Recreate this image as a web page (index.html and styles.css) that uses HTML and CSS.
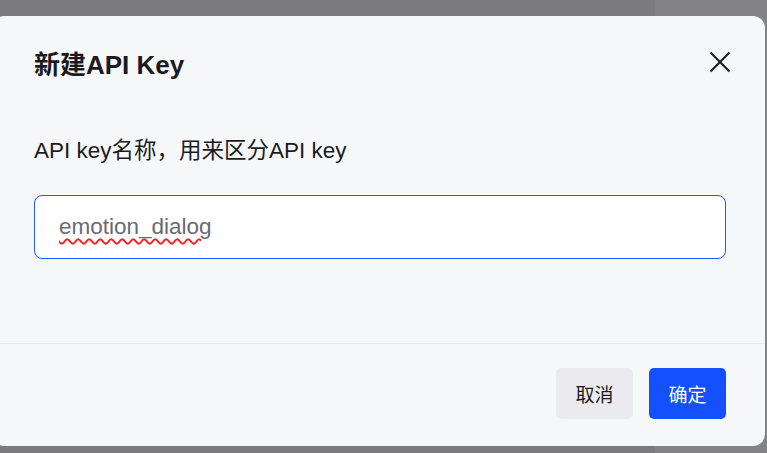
FILE: index.html
```html
<!DOCTYPE html>
<html lang="zh-CN">
<head>
<meta charset="utf-8">
<title>新建API Key</title>
<link rel="stylesheet" href="styles.css">
</head>
<body>
<div class="dialog">
  <div class="dialog-header">
    <h2 class="dialog-title">新建API Key</h2>
    <button class="close-btn" aria-label="关闭">
      <svg width="22" height="22" viewBox="0 0 22 22"><path d="M1.5 1.5 L20.5 20.5 M20.5 1.5 L1.5 20.5" stroke="#1b1b1f" stroke-width="2" fill="none"/></svg>
    </button>
  </div>
  <div class="dialog-body">
    <label class="field-label">API key名称，用来区分API key</label>
    <div class="input"><span class="input-text">emotion_dialog</span></div>
  </div>
  <div class="dialog-footer">
    <button class="btn btn-cancel">取消</button>
    <button class="btn btn-primary">确定</button>
  </div>
</div>
</body>
</html>
```
FILE: styles.css
```css
html, body {
  margin: 0;
  padding: 0;
}
body {
  width: 767px;
  height: 453px;
  overflow: hidden;
  background: linear-gradient(to right, #7b7b7f 0, #7b7b7f 655px, #838385 655px);
  font-family: "Liberation Sans", "Noto Sans CJK SC", sans-serif;
  color: #1b1b1f;
}
.dialog {
  margin-top: 16px;
  margin-left: -8px;
  width: 773px;
  height: 430px;
  background: #f6f7f9;
  border-radius: 12px;
  display: flex;
  flex-direction: column;
  box-sizing: border-box;
}
.dialog-header {
  display: flex;
  align-items: center;
  justify-content: space-between;
  padding: 30px 34px 0 42px;
}
.dialog-title {
  margin: 0;
  font-size: 26px;
  line-height: 38px;
  font-weight: 700;
  color: #1b1b1f;
}
.close-btn {
  border: 0;
  background: none;
  padding: 0;
  width: 22px;
  height: 22px;
  display: flex;
  margin-top: -7px;
}
.dialog-body {
  flex: 1;
  padding: 52px 39px 0 42px;
  display: flex;
  flex-direction: column;
  gap: 29px;
}
.field-label {
  font-size: 22.5px;
  line-height: 30px;
  color: #1b1b1f;
}
.input {
  height: 64px;
  box-sizing: border-box;
  border: 1px solid #1f5cff;
  border-radius: 8px;
  background: #ffffff;
  display: flex;
  align-items: center;
  padding: 0 24px;
}
.input-text {
  font-size: 22.5px;
  color: #6a6a70;
  text-decoration: underline wavy #ff1a1a;
  text-decoration-thickness: 1.5px;
  text-underline-offset: 4px;
}
.dialog-footer {
  border-top: 1px solid #e6e8ec;
  padding: 24px 39px 27px 0;
  display: flex;
  justify-content: flex-end;
  gap: 16px;
}
.btn {
  width: 77px;
  height: 51px;
  border: 0;
  border-radius: 5px;
  font-family: "Liberation Sans", "Noto Sans CJK SC", sans-serif;
  font-size: 19px;
  cursor: pointer;
}
.btn-cancel {
  background: #ebebef;
  color: #1b1b1f;
}
.btn-primary {
  background: #1550ff;
  color: #ffffff;
}
```
